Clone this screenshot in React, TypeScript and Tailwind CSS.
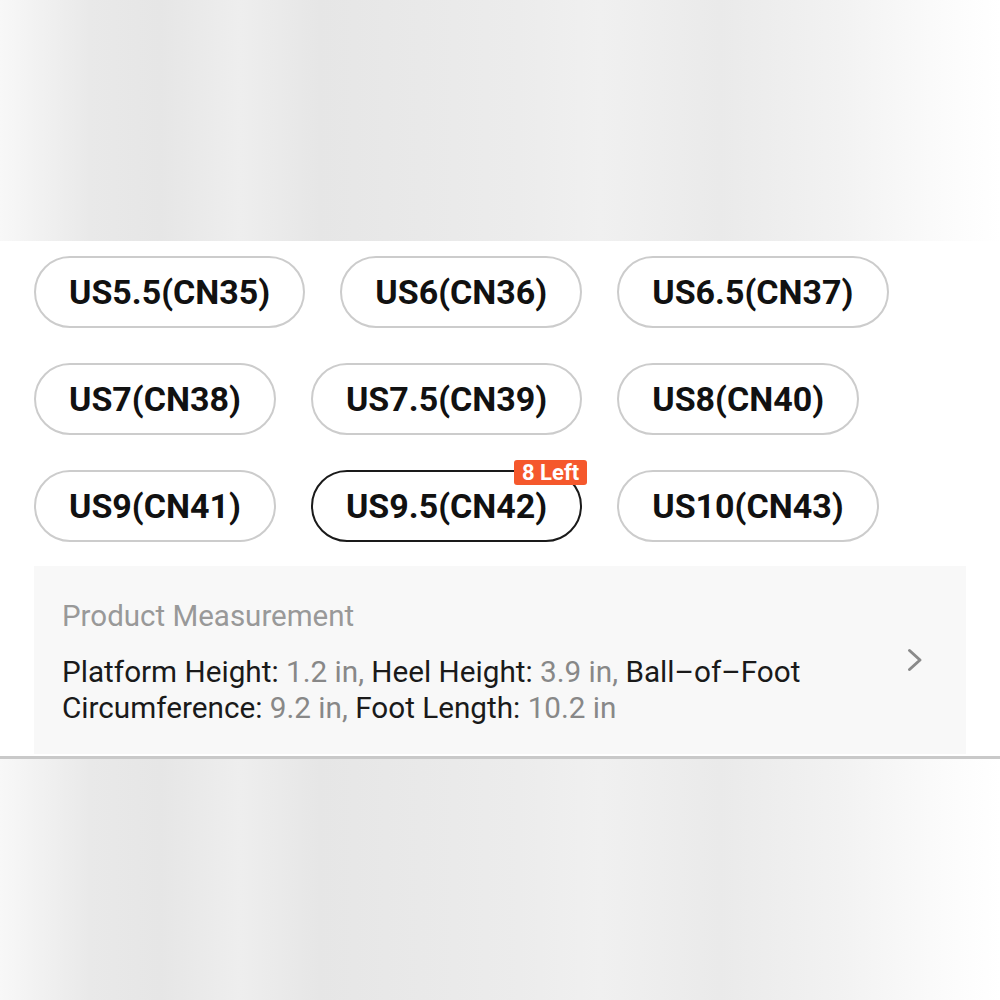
const sizes = [
  { label: 'US5.5(CN35)' },
  { label: 'US6(CN36)' },
  { label: 'US6.5(CN37)' },
  { label: 'US7(CN38)' },
  { label: 'US7.5(CN39)' },
  { label: 'US8(CN40)' },
  { label: 'US9(CN41)' },
  { label: 'US9.5(CN42)', selected: true, badge: '8 Left' },
  { label: 'US10(CN43)' },
];

const blurBg =
  'bg-[linear-gradient(to_right,#f8f8f8_0%,#e9e9e9_9%,#e6e6e6_16%,#eeeeee_24%,#e6e6e6_32%,#e9e9e9_42%,#ececec_52%,#f0f0f0_60%,#eaeaea_72%,#f2f2f2_84%,#fafafa_93%,#ffffff_100%)]';

export default function App() {
  return (
    <div className="w-[1000px] h-[1000px] flex flex-col bg-white font-['Roboto',sans-serif]">
      <div className={`h-[241px] shrink-0 ${blurBg}`} />

      <div className="bg-white px-[34px] pt-[15px] pb-[2px]">
        {/* Size options */}
        <div className="flex flex-wrap gap-[35px]">
          {sizes.map(s => (
            <div
              key={s.label}
              className={
                'relative h-[72px] px-[33px] flex items-center rounded-full ' +
                (s.selected ? 'border-[2.5px] border-[#1a1a1a]' : 'border-2 border-[#cccccc]')
              }
            >
              <span className="text-[34px] font-bold text-[#111] leading-none">{s.label}</span>
              {s.badge && (
                <span className="absolute -top-[12px] -right-[7px] h-[25px] px-[8px] flex items-center rounded-[3px] bg-[#f5582c] text-white text-[22px] font-bold leading-none">
                  {s.badge}
                </span>
              )}
            </div>
          ))}
        </div>

        {/* Product measurement */}
        <div className="mt-[24px] h-[188px] bg-[#f8f8f8] pl-[28px] pr-[43px] flex items-center">
          <div className="flex-1 self-start pt-[32px]">
            <div className="text-[29.5px] leading-[36px] text-[#999]">Product Measurement</div>
            <p className="mt-[20px] text-[29.7px] leading-[36px] text-[#1a1a1a] max-w-[820px]">
              Platform Height: <span className="text-[#888]">1.2 in,</span> Heel Height:{' '}
              <span className="text-[#888]">3.9 in,</span> Ball–of–Foot Circumference:{' '}
              <span className="text-[#888]">9.2 in,</span> Foot Length: <span className="text-[#888]">10.2 in</span>
            </p>
          </div>
          <svg width="16" height="24" viewBox="0 0 16 24" fill="none" className="shrink-0">
            <path d="M2.5 2.5 L13 12 L2.5 21.5" stroke="#8a8a8a" strokeWidth="3" strokeLinecap="round" strokeLinejoin="round" />
          </svg>
        </div>
      </div>

      <div className="h-[3px] bg-[#c9c9c9] shrink-0" />
      <div className={`flex-1 ${blurBg}`} />
    </div>
  );
}
